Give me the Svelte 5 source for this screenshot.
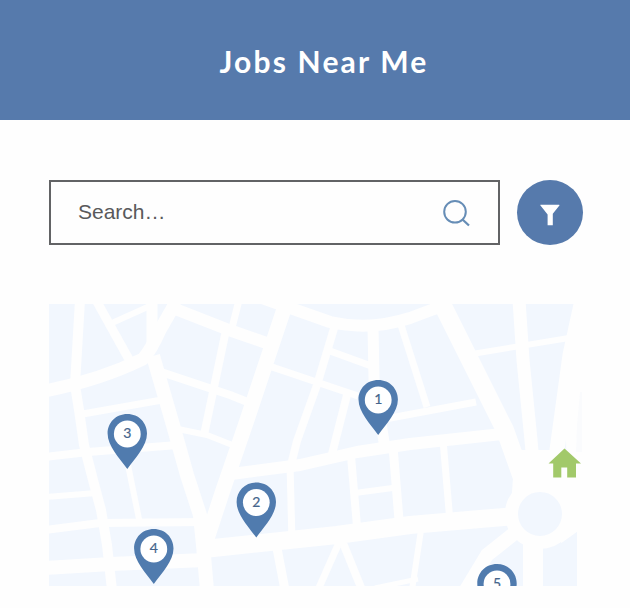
<script>
  const pins = [
    { n: 1, x: 378.2, y: 380 },
    { n: 2, x: 256.3, y: 482.5 },
    { n: 3, x: 127.3, y: 414 },
    { n: 4, x: 153.8, y: 529 },
    { n: 5, x: 497, y: 564 }
  ];
  const roads = [
    { w: 10, d: 'M80 300L75 385L79 410L84 445L93 480L101 510L107 545L112 590' },
    { w: 13, d: 'M45 391Q100 380 143 359Q151 350 160 330L176 302' },
    { w: 9, d: 'M96 300L131 363' },
    { w: 6, d: 'M112 323L152 305' },
    { w: 11, d: 'M152 300V348' },
    { w: 14, d: 'M153 356L173 425L187 475L200 515L203 545L207 590' },
    { w: 12, d: 'M170 307L229 330L272 345' },
    { w: 8, d: 'M226 330L204 435' },
    { w: 8, d: 'M158 371L230 395L255 405' },
    { w: 7, d: 'M77 415L162 400' },
    { w: 6, d: 'M173 428L207 435L240 448' },
    { w: 15, d: 'M287 300L268 357L246 423L222 493L205 545' },
    { w: 7, d: 'M239 300L231 332' },
    { w: 12, d: 'M262 298L330 322Q370 331 410 318L445 305' },
    { w: 8, d: 'M335 325L317 385L297 441L291 465' },
    { w: 7, d: 'M272 367L358 396' },
    { w: 8, d: 'M347 395L331 458' },
    { w: 7, d: 'M330 351L374 367' },
    { w: 11, d: 'M373 325L374 380L385 448' },
    { w: 7, d: 'M401 325L427 407' },
    { w: 7, d: 'M385 419L476 402' },
    { w: 12, d: 'M224 475L300 465L357 452L410 444L502 434' },
    { w: 18, d: 'M440 300L505 430L527 492' },
    { w: 13, d: 'M519 300L523 360L531 440L535 486' },
    { w: 6, d: 'M466 355L575 337' },
    { w: 15, d: 'M582 300L570 355L557 450L549 490' },
    { w: 18, d: 'M204 549L337 535L410 525L515 516' },
    { w: 8, d: 'M45 530L100 523L204 522' },
    { w: 8, d: 'M45 457L88 452L178 445' },
    { w: 6, d: 'M45 497L96 493' },
    { w: 14, d: 'M45 568L111 564L205 560' },
    { w: 6, d: 'M127 460L140 524' },
    { w: 7, d: 'M290 464L292 542' },
    { w: 8, d: 'M351 456L358 538' },
    { w: 9, d: 'M393 447L400 532' },
    { w: 7, d: 'M443 440L450 522' },
    { w: 6, d: 'M355 493L400 487' },
    { w: 9, d: 'M276 543L285 590' },
    { w: 7, d: 'M341 538L318 590' },
    { w: 8, d: 'M341 538L362 590' },
    { w: 6, d: 'M421 530L412 590' },
    { w: 14, d: 'M516 532L487 555L466 590' },
    { w: 5, d: 'M375 588L418 579' },
    { w: 20, d: 'M533 540V590' },
    { w: 22, d: 'M555 534L586 512' }
  ];
</script>

<main>
  <header><h1>Jobs Near Me</h1></header>
  <section class="tools">
    <div class="search">
      <span>Search…</span>
      <svg width="28" height="28" viewBox="0 0 28 28" fill="none" stroke="#668db6" stroke-width="2">
        <circle cx="13" cy="12.8" r="10.8" /><path d="M20.500 20.500L27 26.500" stroke-width="2.3" />
      </svg>
    </div>
    <button aria-label="Filter">
      <svg width="22" height="22" viewBox="0 0 22 22" fill="#fff">
        <path d="M1.300 1.300Q.9.8 1.600.8H20Q20.900.8 20.400 1.500L13.800 9.800V21.200H8.600V10.500Z" />
      </svg>
    </button>
  </section>
  <svg class="map" width="533" height="282" viewBox="49 304 533 282">
    <rect x="49" y="304" width="528" height="282" fill="#f2f7fe" />
    <path d="M580 304L571 355L565 400L567 478L577 480V586H583V304Z" fill="#fefefe" />
    <path d="M577 425L580 392H582V452H576Z" fill="#fafbfd" />
    <g fill="none" stroke="#fefefe" stroke-linejoin="round">
      {#each roads as road}
        <path d={road.d} stroke-width={road.w} />
      {/each}
    </g>
    <path d="M515 450H552L578 470V520H510Z" fill="#fefefe" />
    <circle cx="540" cy="514" r="28.500" fill="#f2f7fe" stroke="#fefefe" stroke-width="13" />
    <path d="M564.500 448.500L581 463.500H576V477.500H567.200V467.500H561.300V477.500H553.200V463.500H548.500Z" fill="#a2c96a" />
    {#each pins as pin}
      <g transform="translate({pin.x} {pin.y})">
        <path d="M0 0C-11.500 0-19.700 8.800-19.700 19.500C-19.700 32-8 44 0 55C8 44 19.700 32 19.700 19.500C19.700 8.800 11.500 0 0 0Z" fill="#507bae" />
        <circle cy="20" r="13.400" fill="#fff" />
        <text y="24.200" text-anchor="middle">{pin.n}</text>
      </g>
    {/each}
  </svg>
</main>

<style>
  :global(body) { background: #fefefe; }
  main { height: 608px; overflow: hidden; background: #fefefe; }
  header {
    height: 120px;
    box-sizing: border-box;
    padding: 1px 0 0 18px;
    display: flex;
    align-items: center;
    justify-content: center;
    background: #567aac;
  }
  h1 {
    margin: 0;
    color: #fff;
    font: 700 30px/40px Lato, sans-serif;
    letter-spacing: 2.2px;
  }
  .tools { display: flex; gap: 17px; padding: 60px 0 0 49px; }
  .search {
    width: 451px;
    height: 65px;
    box-sizing: border-box;
    border: 2px solid #626365;
    padding: 0 28px 0 27px;
    display: flex;
    align-items: center;
    justify-content: space-between;
  }
  .search span { font: 21px/28px "Liberation Sans", Arial, sans-serif; color: #59595b; padding-bottom: 2px; }
  button {
    width: 66px;
    height: 65px;
    border: 0;
    border-radius: 50%;
    padding: 4px 0 0;
    background: #567aac;
    display: grid;
    place-items: center;
  }
  .map { display: block; margin: 59px 0 0 49px; }
  text { font: 14px Lato, sans-serif; fill: #45658c; stroke: #45658c; stroke-width: .2px; }
</style>
